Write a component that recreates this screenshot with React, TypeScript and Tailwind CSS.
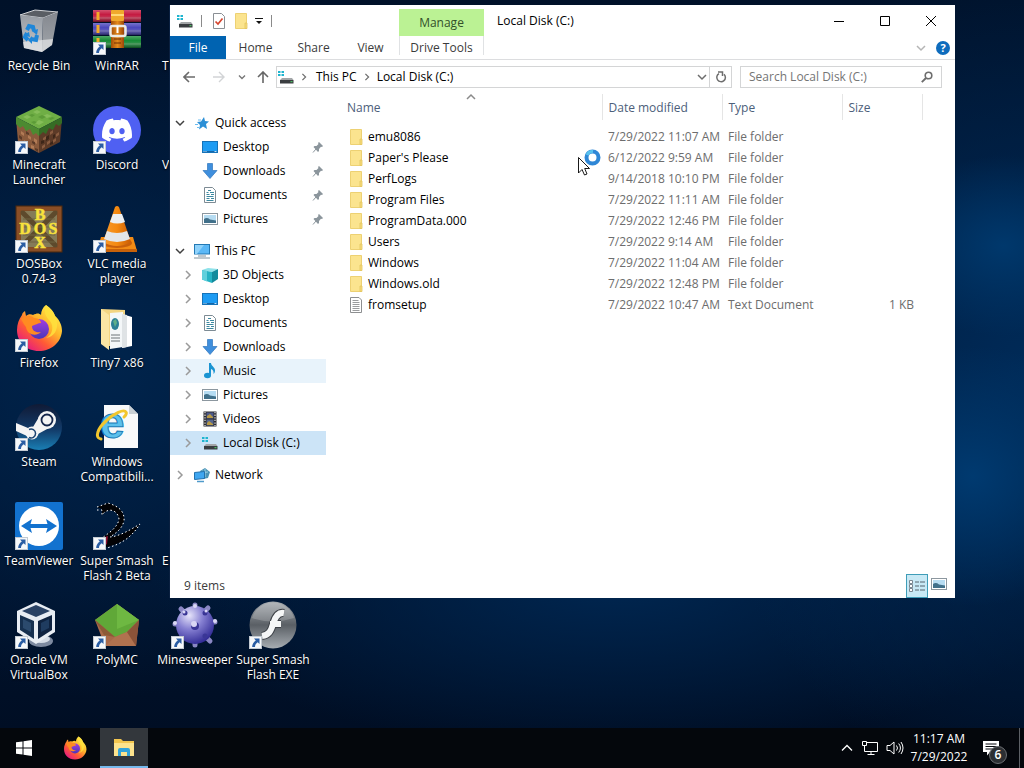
import type { ReactNode } from 'react';
import { SiDiscord } from 'react-icons/si';

type IconProps = { className?: string };

// ---------- desktop icons ----------

function RecycleBinIcon() {
  return (
    <svg viewBox="0 0 48 48" className="size-12">
      <defs>
        <linearGradient id="binL" x1="0" y1="0" x2="0" y2="1">
          <stop offset="0" stopColor="#989da4" /><stop offset="1" stopColor="#c4c7cb" />
        </linearGradient>
        <linearGradient id="binR" x1="0" y1="0" x2="0" y2="1">
          <stop offset="0" stopColor="#84888f" /><stop offset="1" stopColor="#a2a6ab" />
        </linearGradient>
      </defs>
      <path d="M5 8 L20 3 L43 5 L28 11 Z" fill="#5a5e64" stroke="#d4d6d9" strokeWidth="1" />
      <path d="M5 8 L28 11 L27 45 L9 41 Z" fill="url(#binL)" />
      <path d="M28 11 L43 5 L37 38 L27 45 Z" fill="url(#binR)" />
      <path d="M8 35 L27 33 L38 32 L37 38 L27 45 L9 41 Z" fill="#e6e7e8" opacity=".7" />
      <g fill="none" stroke="#1e86d8" strokeWidth="4">
        <path d="M12 23 L14 19 L18 20 L19 24" />
        <path d="M12 26 L10 30 L13 33" />
        <path d="M16 32 L21 33 L22 28" />
      </g>
      <path d="M17 24 L23 22 L22 28 Z M8 28 L14 25 L15 30 Z M17 29 L17 37 L13 33 Z" fill="#1e86d8" />
    </svg>
  );
}

function WinrarIcon() {
  return (
    <svg viewBox="0 0 48 48" className="size-12">
      <defs>
        <linearGradient id="strap" x1="0" y1="0" x2="1" y2="0">
          <stop offset="0" stopColor="#a34d08" /><stop offset=".5" stopColor="#e58a1b" /><stop offset="1" stopColor="#9a4508" />
        </linearGradient>
        <linearGradient id="bookShade" x1="0" y1="0" x2="0" y2="1">
          <stop offset="0" stopColor="#fff" stopOpacity=".25" /><stop offset=".4" stopColor="#fff" stopOpacity="0" /><stop offset="1" stopColor="#000" stopOpacity=".5" />
        </linearGradient>
      </defs>
      <rect x="0" y="3" width="48" height="12" fill="#c4183f" />
      <rect x="0" y="16" width="48" height="12" fill="#4945bb" />
      <rect x="0" y="29" width="48" height="12" fill="#148a34" />
      <path d="M0 11h48M0 24h48M0 37h48" stroke="#d9cfc4" strokeWidth="1" opacity=".35" />
      <rect x="0" y="3" width="48" height="12" fill="url(#bookShade)" />
      <rect x="0" y="16" width="48" height="12" fill="url(#bookShade)" />
      <rect x="0" y="29" width="48" height="12" fill="url(#bookShade)" />
      <path d="M5 5v8M5 18v8M5 31v8" stroke="#f3ac27" strokeWidth="3" />
      <rect x="18" y="3" width="13" height="38" fill="url(#strap)" />
      <rect x="18" y="3" width="13" height="11" rx="1" fill="#f0a92c" />
      <path d="M18 8h13" stroke="#ffd974" strokeWidth="2" />
      <rect x="17.500" y="19" width="15" height="10" rx="2" fill="none" stroke="#eceae4" strokeWidth="2.500" />
      <path d="M24.500 19v7" stroke="#fff" strokeWidth="2" />
      <path d="M21 32h7M21 36h7" stroke="#6f3004" />
    </svg>
  );
}

function MinecraftIcon() {
  return (
    <svg viewBox="0 0 48 48" className="size-12">
      <path d="M1 12 L24 24 L24 47 L3 36 Z" fill="#8a5a3c" />
      <path d="M47 12 L24 24 L24 47 L45 36 Z" fill="#5c3a27" />
      <path d="M24 0 L47 11 L24 23 L1 11 Z" fill="#6fae45" />
      <path d="M1 11 L24 23 V30 L21 27 L18 29 L15 23 L11 25 L8 20 L5 22 L1 18 Z" fill="#4c8a31" />
      <path d="M47 11 L24 23 V30 L28 26 L31 28 L34 22 L38 24 L41 18 L44 20 L47 17 Z" fill="#356c25" />
      <g fill="#85bd59">
        <path d="M22 4l4 2-4 2-4-2zM12 9l4 2-4 2-4-2zM32 8l5 2-5 2-4-2zM24 14l5 2-5 3-4-2z" />
      </g>
      <g fill="#5c9b38">
        <path d="M27 9l4 2-4 2-4-2zM17 8l3 1-3 2-3-2zM37 11l3 1-4 2-3-1zM19 15l3 1-3 2-3-2z" />
      </g>
      <g fill="#b27b55">
        <path d="M6 25l3 2v3l-3-2zM13 29l3 2v3l-3-2zM19 32l3 2v4l-3-2zM9 34l3 2v3l-3-2zM16 39l3 1v3l-3-1z" />
      </g>
      <g fill="#5b3a28">
        <path d="M4 29l3 2v3l-3-2zM11 25l3 2v2l-3-1zM17 35l3 1v3l-3-2zM20 42l3 1v3l-3-2z" />
      </g>
      <g fill="#8a5c40">
        <path d="M28 32l3-2v3l-3 2zM35 26l3-2v3l-3 2zM41 28l3-2v3l-3 2zM32 36l3-2v3l-3 2zM38 34l3-2v3l-3 2zM27 40l3-2v3l-3 2z" />
      </g>
      <g fill="#3d2619">
        <path d="M31 31l3-2v4l-3 2zM38 29l2-1v3l-2 2zM26 35l3-1v3l-3 1zM35 37l3-2v3l-3 1z" />
      </g>
    </svg>
  );
}

function DiscordIcon() {
  return (
    <span className="flex size-12 items-center justify-center rounded-full bg-[#4f60f2]">
      <SiDiscord className="size-[30px] text-white" />
    </span>
  );
}

function DosboxIcon() {
  return (
    <svg viewBox="0 0 48 48" className="size-12">
      <rect x="1" y="1" width="46" height="46" fill="#7a4a22" />
      <rect x="6" y="6" width="36" height="36" fill="#857b58" />
      <path d="M6 6 L42 42 M42 6 L6 42" stroke="#5d4a2c" strokeWidth="5" />
      <path d="M8 14h32M8 22h32M8 30h32M8 37h32" stroke="#6e6440" />
      <rect x="3.500" y="3.500" width="41" height="41" fill="none" stroke="#8a4e26" strokeWidth="4" />
      <rect x="1" y="1" width="46" height="46" fill="none" stroke="#4e280e" strokeWidth="1" />
      <g fill="#f8e23c" fontFamily="Liberation Serif, serif" fontWeight="700" fontSize="16" textAnchor="middle" stroke="#f8e23c" strokeWidth=".5">
        <text x="25" y="15">B</text>
        <text x="10" y="29">D</text>
        <text x="25" y="29">O</text>
        <text x="38" y="29">S</text>
        <text x="25" y="43">X</text>
      </g>
    </svg>
  );
}

function VlcIcon() {
  return (
    <svg viewBox="0 0 48 48" className="size-12">
      <defs>
        <linearGradient id="cone" x1="0" y1="0" x2="1" y2="0">
          <stop offset="0" stopColor="#f79a2e" /><stop offset=".5" stopColor="#f58a10" /><stop offset="1" stopColor="#c95b05" />
        </linearGradient>
      </defs>
      <path d="M8 32 H40 L44 46 H4 Z" fill="#f38b14" />
      <path d="M4 44 H44 V47 H4 Z" fill="#c8620a" />
      <ellipse cx="24" cy="38" rx="15" ry="5" fill="#c9600b" />
      <path d="M22 2 Q24 0 26 2 L38 37 Q24 45 10 37 Z" fill="url(#cone)" />
      <path d="M20 9 H29 L32 17 Q24 20 17 17 Z" fill="#eceff1" />
      <path d="M14 26 Q24 30 34 26 L37 34 Q24 40 11 34 Z" fill="#e3e6e9" />
    </svg>
  );
}

function FirefoxIcon({ className = 'size-12' }: IconProps) {
  return (
    <svg viewBox="0 0 48 48" className={className}>
      <defs>
        <linearGradient id="fxA" x1=".85" y1=".1" x2=".15" y2=".95">
          <stop offset="0" stopColor="#fff04a" /><stop offset=".35" stopColor="#ffb52b" /><stop offset=".65" stopColor="#ff5a36" /><stop offset="1" stopColor="#e31587" />
        </linearGradient>
        <linearGradient id="fxB" x1="0" y1="0" x2="0" y2="1">
          <stop offset="0" stopColor="#a23ee0" /><stop offset="1" stopColor="#4a36b8" />
        </linearGradient>
      </defs>
      <path d="M31 1 C36 4 39 8 40 12 C45 16 47 22 47 27 C46 39 36 47 24 47 C11 47 2 38 2 26 C2 20 4 15 7 11 C7 10 8 8 10 7 L11 12 C13 10 16 10 18 11 C22 9 24 9 26 11 C26 7 28 3 31 1 Z" fill="url(#fxA)" />
      <circle cx="24" cy="25" r="10" fill="url(#fxB)" />
      <path d="M6 15 C10 11 15 11 19 14 C24 14 26 17 26 19 C23 19 20 21 17 22 C17 27 21 29 26 28 C21 33 12 31 11 23 C9 21 8 18 6 15 Z" fill="#ff8b21" />
      <path d="M31 1 C28 8 31 13 35 17 C39 22 38 31 31 34 C39 33 43 26 42 18 C41 10 36 5 31 1 Z" fill="#ffe03d" opacity=".85" />
    </svg>
  );
}

function OpenFolderIcon() {
  return (
    <svg viewBox="0 0 48 48" className="size-12">
      <path d="M8 5 L32 6 V42 H12 L8 38 Z" fill="#f3d582" />
      <path d="M17 9 L30 8 V43 L17 45 Z" fill="#f4f7f8" />
      <path d="M29 10 L39 13 V42 L29 44 Z" fill="#fff" />
      <path d="M29 10 L34 11 V43 L29 44 Z" fill="#dfe3e5" />
      <ellipse cx="22" cy="20" rx="4" ry="6" fill="#2d7f96" />
      <path d="M20 17 l3 -2 1 4 -2 4z" fill="#5eae8a" />
      <path d="M18 31h9M18 34h9M18 37h9" stroke="#6d7478" />
      <path d="M8 5 L16 11 V46 L8 40 Z" fill="#fbe6a4" />
    </svg>
  );
}

function SteamIcon() {
  return (
    <svg viewBox="0 0 48 48" className="size-12">
      <defs>
        <linearGradient id="steam" x1="0" y1="0" x2="0" y2="1">
          <stop offset="0" stopColor="#101a35" /><stop offset=".55" stopColor="#123a68" /><stop offset="1" stopColor="#1a7fb4" />
        </linearGradient>
      </defs>
      <circle cx="24" cy="24" r="23" fill="url(#steam)" />
      <path d="M1 20 L13 25 L18 24 L24 14 L34 25 L23 31 L21 34 L12 33 L1 28 Z" fill="#f4f4f4" />
      <circle cx="17" cy="30" r="6.500" fill="#f4f4f4" />
      <path d="M14 34.500 a4.500 4.500 0 1 0 0 -8" fill="none" stroke="#1a4371" strokeWidth="1.500" />
      <circle cx="32" cy="17" r="9" fill="#f4f4f4" />
      <circle cx="32" cy="17" r="5.500" fill="#f4f4f4" stroke="#14254a" strokeWidth="1.800" />
    </svg>
  );
}

function IeIcon() {
  return (
    <svg viewBox="0 0 48 48" className="size-12 overflow-visible">
      <path d="M11 2 H36 L45 11 V45 H11 Z" fill="#f8f9fa" />
      <path d="M36 2 L45 11 H36 Z" fill="#c9d0d5" />
      <text x="7" y="35" fontFamily="Liberation Sans, sans-serif" fontWeight="700" fontSize="44" fill="#5cc0ec" stroke="#1a7cb8" strokeWidth="1">e</text>
      <path d="M8 36 C1 35 5 25 13 18 C21 10 31 6 33 9 C34 10 33 12 31 14" fill="none" stroke="#f2c62d" strokeWidth="3" strokeLinecap="round" />
    </svg>
  );
}

function TeamviewerIcon() {
  return (
    <svg viewBox="0 0 48 48" className="size-12">
      <rect width="48" height="48" rx="2" fill="#1272cf" />
      <circle cx="24" cy="24" r="20" fill="#fff" />
      <path d="M6 24 L17 17 L15.500 22 H32.500 L31 17 L42 24 L31 31 L32.500 26 H15.500 L17 31 Z" fill="#1272cf" />
    </svg>
  );
}

function SmashFlashIcon() {
  return (
    <svg viewBox="0 0 48 48" className="size-12">
      <path d="M4 5 L15 1 C24 4 32 8 31 19 C29 27 23 31 17 35 C27 34 37 28 47 22 C38 36 28 42 9 46 V36 C16 31 25 25 26 17 C25 9 16 4 9 13 L9 7 Z" fill="#020205" />
      <path d="M9 36 L15 34 L14 42 L9 46 Z" fill="#8d1030" />
      <path d="M4 5 L15 1 C24 4 32 8 31 19 C29 27 23 31 17 35 C27 34 37 28 47 22 C38 36 28 42 14 46" fill="none" stroke="#fff" strokeWidth="1" strokeDasharray="1.500 2.500" />
      <path d="M4 8 L9 8 V13 C16 4 25 9 26 17 C25 25 16 31 9 36" fill="none" stroke="#fff" strokeWidth="1" strokeDasharray="1.500 2.500" />
    </svg>
  );
}

function VirtualboxIcon() {
  return (
    <svg viewBox="0 0 48 48" className="size-12">
      <ellipse cx="26" cy="40" rx="12" ry="6" fill="#7d8aa0" />
      <ellipse cx="26" cy="38" rx="9" ry="4" fill="#d5dce6" />
      <path d="M21 1 L40 10 V31 L21 43 L2 31 V10 Z" fill="#e8edf3" />
      <path d="M21 4 L35 10 L21 16 L7 10 Z" fill="#2a4264" />
      <path d="M5 14 L19 20 V38 L5 29 Z" fill="#16304f" />
      <path d="M37 14 L23 20 V38 L37 29 Z" fill="#0f2340" />
      <path d="M8 18 L16 22 V31 L8 27 Z" fill="#2b4a6d" />
      <path d="M34 18 L26 22 V31 L34 27 Z" fill="#1f3c60" />
    </svg>
  );
}

function PolymcIcon() {
  return (
    <svg viewBox="0 0 48 48" className="size-12">
      <path d="M24 3 L46 19 L43 45 H12 L2 19 Z" fill="#a9694a" />
      <path d="M24 3 L46 19 L34 31 L22 36 L2 19 Z" fill="#60a838" />
      <path d="M24 3 L46 19 L24 28 Z" fill="#6eb842" />
      <path d="M2 19 L22 36 L11 34 Z" fill="#8c5a38" />
      <path d="M22 36 L34 31 L43 45 H12 Z" fill="#b1724f" />
      <path d="M46 19 L34 31 L43 45 Z" fill="#8b5339" />
    </svg>
  );
}

function MinesweeperIcon() {
  return (
    <svg viewBox="0 0 48 48" className="size-12">
      <defs>
        <radialGradient id="mine" cx=".35" cy=".25" r=".8">
          <stop offset="0" stopColor="#e6e4fa" /><stop offset=".45" stopColor="#8680d2" /><stop offset="1" stopColor="#2d2792" />
        </radialGradient>
      </defs>
      <g stroke="#8a87c4" strokeWidth="5" strokeLinecap="round">
        <path d="M24 4v6M24 38v6M4 23h5M39 21h5M10 8l4 4M37 7l-4 4M39 40l-5-5M10 39l4-4" />
      </g>
      <circle cx="24" cy="24" r="19" fill="url(#mine)" />
      <g fill="#3a3696">
        <circle cx="24" cy="25" r="4" /><circle cx="14" cy="12" r="2.500" /><circle cx="34" cy="12" r="2.500" /><circle cx="34" cy="35" r="2.500" />
      </g>
      <g fill="#d9d7f4">
        <circle cx="23" cy="23" r="3" /><circle cx="13" cy="11" r="1.500" /><circle cx="35" cy="10" r="1.500" /><circle cx="24" cy="5" r="2" /><circle cx="4" cy="22" r="2" /><circle cx="44" cy="20" r="2" />
      </g>
    </svg>
  );
}

function FlashIcon() {
  return (
    <svg viewBox="0 0 48 48" className="size-12">
      <defs>
        <linearGradient id="flash" x1="0" y1="0" x2="0" y2="1">
          <stop offset="0" stopColor="#a4a9ae" /><stop offset=".5" stopColor="#5a5f65" /><stop offset="1" stopColor="#a7adb2" />
        </linearGradient>
      </defs>
      <circle cx="24" cy="24" r="23.500" fill="url(#flash)" />
      <path d="M3 17 A22 22 0 0 1 45 17 Q24 24 3 17 Z" fill="#fff" opacity=".18" />
      <path d="M35 12 C29 11 26 16 24 23 C22 30 20 34 13 35 M21 23 H32" fill="none" stroke="#3c4046" strokeWidth="8" />
      <path d="M35 12 C29 11 26 16 24 23 C22 30 20 34 13 35 M21 23 H32" fill="none" stroke="#f5f6f7" strokeWidth="6" />
    </svg>
  );
}

function ShortcutArrow() {
  return (
    <svg viewBox="0 0 13 13" className="absolute bottom-0 left-0 size-[13px]">
      <rect x=".5" y=".5" width="12" height="12" fill="#f6f8fa" stroke="#c3cad2" />
      <path d="M5 2.500 H10.500 V8 L8.700 6.300 C7 7.500 6 9 6 11 H3.200 C3 8.500 4.500 6 6.800 4.400 Z" fill="#2a5da3" />
    </svg>
  );
}

type DesktopItem = { label: string; icon?: ReactNode; shortcut?: boolean };

const DESKTOP_ITEMS: (DesktopItem | null)[] = [
  { label: 'Recycle Bin', icon: <RecycleBinIcon /> },
  { label: 'Minecraft\nLauncher', icon: <MinecraftIcon />, shortcut: true },
  { label: 'DOSBox\n0.74-3', icon: <DosboxIcon />, shortcut: true },
  { label: 'Firefox', icon: <FirefoxIcon />, shortcut: true },
  { label: 'Steam', icon: <SteamIcon />, shortcut: true },
  { label: 'TeamViewer', icon: <TeamviewerIcon />, shortcut: true },
  { label: 'Oracle VM\nVirtualBox', icon: <VirtualboxIcon />, shortcut: true },
  { label: 'WinRAR', icon: <WinrarIcon />, shortcut: true },
  { label: 'Discord', icon: <DiscordIcon />, shortcut: true },
  { label: 'VLC media\nplayer', icon: <VlcIcon />, shortcut: true },
  { label: 'Tiny7 x86', icon: <OpenFolderIcon /> },
  { label: 'Windows\nCompatibili...', icon: <IeIcon /> },
  { label: 'Super Smash\nFlash 2 Beta', icon: <SmashFlashIcon />, shortcut: true },
  { label: 'PolyMC', icon: <PolymcIcon />, shortcut: true },
  { label: 'T' },
  { label: 'V' },
  null,
  null,
  null,
  { label: 'E' },
  { label: 'Minesweeper', icon: <MinesweeperIcon />, shortcut: true },
  null,
  null,
  null,
  null,
  null,
  null,
  { label: 'Super Smash\nFlash EXE', icon: <FlashIcon />, shortcut: true },
];

function DesktopTile({ item }: { item: DesktopItem }) {
  return (
    <button className={`flex flex-col pt-[7px] ${item.icon ? 'items-center' : 'items-start pl-1.5'}`}>
      <span className="relative block size-12">
        {item.icon}
        {item.shortcut && <ShortcutArrow />}
      </span>
      <span className="mt-[3px] whitespace-pre text-center leading-[15px] text-white [text-shadow:0_1px_2px_#000]">
        {item.label}
      </span>
    </button>
  );
}

// ---------- explorer icons ----------

function DriveIcon({ className = 'size-4' }: IconProps) {
  return (
    <svg viewBox="0 0 16 16" className={className}>
      <path d="M0 2h2.500v2H0zM3.500 2H6v2H3.500zM0 5h2.500v2H0zM3.500 5H6v2H3.500z" fill="#1fb5cf" />
      <path d="M4 9 H14 L15.500 11 H2 Z" fill="#a3a6a8" />
      <rect x="2" y="11" width="13.500" height="3.500" fill="#3a3d40" />
      <path d="M12.500 12.700h2" stroke="#4fdc6a" />
    </svg>
  );
}

function FolderIcon() {
  return (
    <svg viewBox="0 0 16 18" className="h-[18px] w-4">
      <path d="M2.500 1.500 H13.500 V16.500 H2.500 Z" fill="#fbe48f" stroke="#edd173" />
      <path d="M12 11 H14 V16.500 H12 Z" fill="#f7dc7c" stroke="#e3c45e" strokeWidth=".8" />
    </svg>
  );
}

function TextFileIcon() {
  return (
    <svg viewBox="0 0 16 18" className="h-[18px] w-4">
      <path d="M2.500 1.500 H11 L13.500 4 V16.500 H2.500 Z" fill="#fff" stroke="#8d8f91" />
      <path d="M4.500 4.500h6M4.500 6.500h7M4.500 8.500h7M4.500 10.500h7M4.500 12.500h7M4.500 14.500h7" stroke="#9a9c9e" />
    </svg>
  );
}

function StarIcon() {
  return (
    <svg viewBox="0 0 16 16" className="size-4">
      <path d="M10 2 L11 6 L15 6.500 L12 9 L13 14 L9 11.500 L5 14.500 L6 10 L3 7 L7 6.500 Z" fill="#2b8fd6" />
      <path d="M1 9.500h3M3 12.500h2M4 5h3" stroke="#6bbcf0" />
    </svg>
  );
}

function DesktopIcon() {
  return (
    <svg viewBox="0 0 16 16" className="size-4">
      <rect x=".5" y="2.500" width="15" height="11" fill="#1e9cf3" stroke="#1673b9" />
      <path d="M1 12.500h14" stroke="#1566a8" />
      <path d="M1.500 12.500h1M3.500 12.500h1M12.500 12.500h2" stroke="#bfe2ff" />
    </svg>
  );
}

function DownloadIcon() {
  return (
    <svg viewBox="0 0 16 16" className="size-4">
      <path d="M5.500 .5 H10.500 V7.500 H15 L8 15.500 L1 7.500 H5.500 Z" fill="#3f8fdd" stroke="#2f76bb" strokeWidth=".7" />
    </svg>
  );
}

function DocumentIcon() {
  return (
    <svg viewBox="0 0 16 16" className="size-4">
      <path d="M2.500 .5 H10.500 L13.500 3.500 V15.500 H2.500 Z" fill="#fff" stroke="#7d8b94" />
      <path d="M4.500 5.500h2M8 5.500h4M4.500 7.500h3M9 7.500h3M4.500 9.500h7M4.500 11.500h3M9 11.500h3M4.500 13.500h7M6 3.500h3" stroke="#3d88a0" />
    </svg>
  );
}

function PictureIcon() {
  return (
    <svg viewBox="0 0 16 16" className="size-4">
      <rect x=".5" y="2.500" width="15" height="11" fill="#fff" stroke="#8c979f" />
      <rect x="2" y="4" width="12" height="8" fill="#b6dcf2" />
      <path d="M2 8 Q5 6 8 8.500 L14 9.500 V12 H2 Z" fill="#41708a" />
    </svg>
  );
}

function ComputerIcon() {
  return (
    <svg viewBox="0 0 16 16" className="size-4">
      <rect x=".5" y="1.500" width="15" height="9.500" fill="#5bb8f6" stroke="#2379b4" />
      <path d="M1 2 H10 L3 11 H1 Z" fill="#8fd2fb" />
      <path d="M4 13h8M0 15h16" stroke="#7e929e" />
    </svg>
  );
}

function CubeIcon() {
  return (
    <svg viewBox="0 0 16 16" className="size-4">
      <path d="M0 3 L6 1 L16 2 L10 5 Z" fill="#8ee2ea" />
      <path d="M0 3 L10 5 V16 L0 12.500 Z" fill="#25b3c4" />
      <path d="M10 5 L16 2 V12 L10 16 Z" fill="#128a9c" />
      <path d="M0 3 L5 4 V14.500 L0 12.500 Z" fill="#5fd0dc" />
    </svg>
  );
}

function MusicIcon() {
  return (
    <svg viewBox="0 0 16 16" className="size-4">
      <ellipse cx="5.500" cy="12.500" rx="3.500" ry="2.800" fill="#1b94d2" />
      <path d="M7 0 H9 C9 3 13 4 13 7.500 C13 9 12.500 10 11.500 11 C12 8 10.500 6.500 9 6 V12.500 H7 Z" fill="#1b94d2" />
    </svg>
  );
}

function VideoIcon() {
  return (
    <svg viewBox="0 0 16 16" className="size-4">
      <rect x="1.500" y=".5" width="13" height="15" fill="#2c2c30" />
      <path d="M3 1v14M13 1v14" stroke="#d8d8d8" strokeWidth="1.300" strokeDasharray="1.300 1.300" />
      <rect x="4.500" y="1.500" width="7" height="6" fill="#4c5a8c" />
      <rect x="4.500" y="8.500" width="7" height="6" fill="#57678f" />
      <path d="M5 5l3-2 3 3v1H5zM5 12l2-2 4 3v1H5z" fill="#b89a45" />
    </svg>
  );
}

function NetworkIcon() {
  return (
    <svg viewBox="0 0 16 16" className="size-4">
      <path d="M6 4 L11 1 L16 5 L14 11 L9 12 Z" fill="#4b93b5" />
      <path d="M8 4 q3 2 6 1 M11 2v8" stroke="#9fd3e8" fill="none" />
      <path d="M.5 5.500 L10.500 4.500 V11.500 L.5 12.500 Z" fill="#3fa6f0" stroke="#2271ad" />
      <path d="M3 14.500h7" stroke="#4f9acb" strokeWidth="1.500" />
    </svg>
  );
}

function PinIcon() {
  return (
    <svg viewBox="0 0 12 12" className="size-3">
      <path d="M7 1 L11 5 L10 6 L9 5.700 L7 8 L7 10 L6 11 L1.500 6 L2.500 5 L4.500 5 L6.500 3 L6 2 Z" fill="#8b959c" />
      <path d="M4 8 L1 11.500" stroke="#8b959c" />
    </svg>
  );
}

function Chevron({ dir, className = 'size-2.5' }: { dir: 'right' | 'down' | 'up'; className?: string }) {
  const d = { right: 'M3 1 L7 5 L3 9', down: 'M1 3 L5 7 L9 3', up: 'M1 7 L5 3 L9 7' }[dir];
  return (
    <svg viewBox="0 0 10 10" className={`shrink-0 ${className}`}>
      <path d={d} fill="none" stroke="currentColor" strokeWidth="1.500" />
    </svg>
  );
}

type TreeRow = {
  label: string; icon: ReactNode; root?: boolean; open?: boolean; pinned?: boolean; state?: 'hover' | 'selected';
};

const TREE: TreeRow[][] = [
  [
    { label: 'Quick access', icon: <StarIcon />, root: true, open: true },
    { label: 'Desktop', icon: <DesktopIcon />, pinned: true },
    { label: 'Downloads', icon: <DownloadIcon />, pinned: true },
    { label: 'Documents', icon: <DocumentIcon />, pinned: true },
    { label: 'Pictures', icon: <PictureIcon />, pinned: true },
  ],
  [
    { label: 'This PC', icon: <ComputerIcon />, root: true, open: true },
    { label: '3D Objects', icon: <CubeIcon /> },
    { label: 'Desktop', icon: <DesktopIcon /> },
    { label: 'Documents', icon: <DocumentIcon /> },
    { label: 'Downloads', icon: <DownloadIcon /> },
    { label: 'Music', icon: <MusicIcon />, state: 'hover' },
    { label: 'Pictures', icon: <PictureIcon /> },
    { label: 'Videos', icon: <VideoIcon /> },
    { label: 'Local Disk (C:)', icon: <DriveIcon />, state: 'selected' },
  ],
  [{ label: 'Network', icon: <NetworkIcon />, root: true }],
];

const FILES = [
  { name: 'emu8086', date: '7/29/2022 11:07 AM', type: 'File folder', size: '' },
  { name: "Paper's Please", date: '6/12/2022 9:59 AM', type: 'File folder', size: '' },
  { name: 'PerfLogs', date: '9/14/2018 10:10 PM', type: 'File folder', size: '' },
  { name: 'Program Files', date: '7/29/2022 11:11 AM', type: 'File folder', size: '' },
  { name: 'ProgramData.000', date: '7/29/2022 12:46 PM', type: 'File folder', size: '' },
  { name: 'Users', date: '7/29/2022 9:14 AM', type: 'File folder', size: '' },
  { name: 'Windows', date: '7/29/2022 11:04 AM', type: 'File folder', size: '' },
  { name: 'Windows.old', date: '7/29/2022 12:48 PM', type: 'File folder', size: '' },
  { name: 'fromsetup', date: '7/29/2022 10:47 AM', type: 'Text Document', size: '1 KB' },
];

function TitleBar() {
  return (
    <header className="flex h-[31px] items-stretch pr-px">
      <div className="flex w-[229px] items-center pl-[7px]">
        <DriveIcon />
        <span className="ml-2 h-3 w-px bg-[#8a8a8a]" />
        <button aria-label="Properties" className="ml-2.5">
          <svg viewBox="0 0 14 16" className="h-4 w-3.5">
            <path d="M1.500 .5 H9.500 L12.500 3.500 V15.500 H1.500 Z" fill="#fff" stroke="#8a8f94" />
            <path d="M3.500 8.500 L6 11 L10.500 5.500" fill="none" stroke="#d6452f" strokeWidth="1.700" />
          </svg>
        </button>
        <button aria-label="New folder" className="ml-[7px]"><FolderIcon /></button>
        <button aria-label="Customize Quick Access Toolbar" className="ml-1.5">
          <svg viewBox="0 0 8 8" className="size-2"><path d="M0 1.500h8" stroke="#111" /><path d="M1 4 H7 L4 7 Z" fill="#111" /></svg>
        </button>
        <span className="ml-2 h-3 w-px bg-[#8a8a8a]" />
      </div>
      <div className="mt-1 flex w-[85px] items-center justify-center bg-[#bbf294] text-[#33502a]">Manage</div>
      <h1 className="flex-1 self-center pl-[13px] text-black">Local Disk (C:)</h1>
      <button aria-label="Minimize" className="flex w-[46px] items-center justify-center">
        <svg viewBox="0 0 10 10" className="size-2.5"><path d="M0 5.500h10" stroke="#000" /></svg>
      </button>
      <button aria-label="Maximize" className="flex w-[46px] items-center justify-center">
        <svg viewBox="0 0 10 10" className="size-2.5"><path d="M.5 .5h9v9h-9z" fill="none" stroke="#000" /></svg>
      </button>
      <button aria-label="Close" className="flex w-[46px] items-center justify-center">
        <svg viewBox="0 0 10 10" className="size-2.5"><path d="M0 0L10 10M10 0L0 10" stroke="#000" /></svg>
      </button>
    </header>
  );
}

function RibbonTabs() {
  return (
    <nav className="flex h-6 items-stretch border-b border-[#dcdddf] text-[#3b3b3b]">
      <button className="w-14 bg-[#0063b1] text-white">File</button>
      <button className="w-[59px]">Home</button>
      <button className="w-[57px]">Share</button>
      <button className="w-[57px]">View</button>
      <button className="mb-1 w-[85px] border-x border-[#e0e2e4] pt-1">Drive Tools</button>
      <div className="flex flex-1 items-center justify-end gap-2.5 pr-[5px]">
        <button aria-label="Expand the Ribbon" className="text-[#b5b5b5]"><Chevron dir="down" /></button>
        <button aria-label="Help" className="flex size-3.5 items-center justify-center rounded-full bg-[#0e6cbd] text-[11px] leading-none font-bold text-white">?</button>
      </div>
    </nav>
  );
}

function AddressRow() {
  return (
    <div className="flex h-[34px] items-center px-[13px] text-[#6d6d6d]">
      <button aria-label="Back">
        <svg viewBox="0 0 12 12" className="size-3"><path d="M12 6H1M6 1L1 6l5 5" fill="none" stroke="#6b6b6b" strokeWidth="1.600" /></svg>
      </button>
      <button aria-label="Forward" className="ml-[18px]">
        <svg viewBox="0 0 12 12" className="size-3"><path d="M0 6h11M6 1l5 5-5 5" fill="none" stroke="#d2d4d6" strokeWidth="1.400" /></svg>
      </button>
      <button aria-label="Recent locations" className="ml-[13px]">
        <svg viewBox="0 0 8 8" className="size-2"><path d="M1 2.500l3 3 3-3" fill="none" stroke="#777" strokeWidth="1.400" /></svg>
      </button>
      <button aria-label="Up" className="ml-[11px]">
        <svg viewBox="0 0 12 12" className="size-3"><path d="M6 12V1M1 6l5-5 5 5" fill="none" stroke="#666" strokeWidth="1.600" /></svg>
      </button>
      <div className="ml-[7px] flex h-[22px] flex-1 items-center border border-[#d4d5d6]">
        <DriveIcon className="ml-px size-4" />
        <Chevron dir="right" className="mx-1.5 size-2" />
        <button className="ml-0.5 text-black">This PC</button>
        <Chevron dir="right" className="mx-1.5 size-2" />
        <button className="text-black">Local Disk (C:)</button>
        <button aria-label="Previous locations" className="mr-0.5 ml-auto"><Chevron dir="down" /></button>
        <button aria-label="Refresh" className="flex h-full w-[22px] items-center justify-center border-l border-[#d4d5d6]">
          <svg viewBox="0 0 12 12" className="size-3">
            <path d="M9 3.200 A4.300 4.300 0 1 1 4 2.600" fill="none" stroke="#6d6d6d" strokeWidth="1.500" />
            <path d="M3 1 H7.500 V5" fill="none" stroke="#6d6d6d" strokeWidth="1.500" />
          </svg>
        </button>
      </div>
      <label className="ml-2 flex h-[22px] w-[202px] items-center border border-[#d4d5d6] px-2">
        <input
          type="text"
          aria-label="Search Local Disk (C:)"
          placeholder="Search Local Disk (C:)"
          className="min-w-0 flex-1 outline-none placeholder:text-[#757575]"
        />
        <svg viewBox="0 0 12 12" className="size-3">
          <circle cx="7.500" cy="4.500" r="3.300" fill="none" stroke="#6d6d6d" strokeWidth="1.600" />
          <path d="M5 7L.8 11.200" stroke="#6d6d6d" strokeWidth="1.900" />
        </svg>
      </label>
    </div>
  );
}

function NavTree() {
  return (
    <aside className="w-[156px] shrink-0 space-y-2 pt-[17px]">
      {TREE.map((group, i) => (
        <ul key={i}>
          {group.map((row) => (
            <li key={row.label}>
              <button
                className={`flex h-6 w-full items-center text-left text-black ${row.root ? 'pl-[5px]' : 'pl-[13px]'} ${
                  row.state === 'selected' ? 'bg-[#cce4f7]' : row.state === 'hover' ? 'bg-[#e8f3fb]' : ''
                }`}
              >
                <span className={`w-2.5 ${row.open ? 'text-[#404040]' : 'text-[#9a9a9a]'}`}>
                  {!row.pinned && <Chevron dir={row.open ? 'down' : 'right'} />}
                </span>
                <span className="mr-[5px] ml-[9px]">{row.icon}</span>
                <span className="flex-1 whitespace-nowrap">{row.label}</span>
                {row.pinned && <span className="mr-0.5"><PinIcon /></span>}
              </button>
            </li>
          ))}
        </ul>
      ))}
    </aside>
  );
}

function FileTable() {
  return (
    <table className="h-fit w-[586px] table-fixed text-left text-[#6d6d6d]">
      <colgroup>
        <col className="w-[266px]" />
        <col className="w-[120px]" />
        <col className="w-[120px]" />
        <col className="w-20" />
      </colgroup>
      <thead>
        <tr className="h-[26px] text-[#4c607a]">
          <th className="relative border-r border-[#e5e5e5] pt-0.5 pl-[11px] font-normal">
            Name
            <Chevron dir="up" className="absolute -top-0.5 left-[130px] size-2.5 text-[#8a8a8a]" />
          </th>
          <th className="border-r border-[#e5e5e5] pt-0.5 pl-1.5 font-normal">Date modified</th>
          <th className="border-r border-[#e5e5e5] pt-0.5 pl-1.5 font-normal">Type</th>
          <th className="border-r border-[#e5e5e5] pt-0.5 pl-1.5 font-normal">Size</th>
        </tr>
      </thead>
      <tbody className="before:block before:h-1.5">
        {FILES.map((f) => (
          <tr key={f.name} className="h-[21px]">
            <td className="pl-3 text-black">
              <span className="flex items-center gap-1">
                {f.type === 'File folder' ? <FolderIcon /> : <TextFileIcon />}
                {f.name}
              </span>
            </td>
            <td className="pl-1.5 whitespace-nowrap">{f.date}</td>
            <td className="pl-1.5">{f.type}</td>
            <td className="pr-2 text-right">{f.size}</td>
          </tr>
        ))}
      </tbody>
    </table>
  );
}

function StatusBar() {
  return (
    <footer className="flex h-[25px] items-center pr-[7px] text-[#3c3c3c]">
      <span className="flex-1 pl-3.5">9 items</span>
      <button aria-label="Details view" className="flex h-6 w-[22px] items-center justify-center border border-[#3f9db8] bg-[#c8e9f5]">
        <svg viewBox="0 0 16 14" className="h-3.5 w-4">
          <path d="M.5 1.500h3v3h-3zM.5 5.500h3v3h-3zM.5 9.500h3v3h-3z" fill="#fff" stroke="#7a8790" />
          <path d="M6 3h4M11 3h5M6 7h4M11 7h5M6 11h4M11 11h5" stroke="#56646e" />
        </svg>
      </button>
      <button aria-label="Thumbnail view" className="ml-0.5 p-px pb-1">
        <PictureIcon />
      </button>
    </footer>
  );
}

function ExplorerWindow() {
  return (
    <section className="absolute top-[5px] right-[69px] bottom-[170px] left-[169px] flex flex-col border-l border-[#0a2040] bg-white">
      <TitleBar />
      <RibbonTabs />
      <AddressRow />
      <div className="flex min-h-0 flex-1 gap-2.5">
        <NavTree />
        <FileTable />
      </div>
      <StatusBar />
    </section>
  );
}

function BusyCursor() {
  return (
    <svg viewBox="0 0 24 28" className="pointer-events-none absolute top-[148px] left-[577px] h-7 w-6">
      <circle cx="15.500" cy="9.500" r="6" fill="none" stroke="#2f87d6" strokeWidth="4" />
      <path d="M10 7 A6 6 0 0 1 16 3.500" fill="none" stroke="#58c1ee" strokeWidth="3" />
      <path d="M1.500 9.500 V25 L5 21.500 L7.500 27 L10 26 L7.700 20.500 H12.500 Z" fill="#fff" stroke="#000" strokeWidth=".9" />
    </svg>
  );
}

function Taskbar() {
  return (
    <footer className="absolute inset-x-0 bottom-0 flex h-10 items-stretch bg-[#04070c] text-white">
      <button aria-label="Start" className="flex w-12 items-center justify-center">
        <svg viewBox="0 0 16 16" className="size-4">
          <path d="M0 2.300 L6.500 1.400 V7.500 H0 Z M7.500 1.200 L16 0 V7.500 H7.500 Z M0 8.500 H6.500 V14.600 L0 13.700 Z M7.500 8.500 H16 V16 L7.500 14.800 Z" fill="#fff" />
        </svg>
      </button>
      <button aria-label="Firefox" className="ml-[3px] flex w-12 items-center justify-center"><FirefoxIcon className="size-6" /></button>
      <button aria-label="File Explorer" className="ml-px flex w-12 items-center justify-center border-b-2 border-[#76b9ed] bg-[#33373c] pt-0.5">
        <svg viewBox="0 0 24 20" className="h-5 w-6">
          <path d="M2 1 H9 L11 3 H22 V18 H2 Z" fill="#f3c64f" />
          <path d="M2 5 H22 V18 H2 Z" fill="#fde38d" />
          <path d="M6 18 V12 Q6 10 8 10 H16 Q18 10 18 12 V18 H15 V14 H9 V18 Z" fill="#33a3da" />
        </svg>
      </button>
      <div className="ml-auto flex items-center">
        <button aria-label="Show hidden icons">
          <svg viewBox="0 0 12 12" className="size-3"><path d="M1 8.500l5-5 5 5" fill="none" stroke="#fff" strokeWidth="1.300" /></svg>
        </button>
        <svg viewBox="0 0 18 16" className="ml-2 h-4 w-[18px]">
          <path d="M6 2.500H16.500V11.500H3.500V7M6.500 14.500h7M10 11.500v3" fill="none" stroke="#fff" />
          <path d="M1.500 1.500h4v4h-4zM3.500 5.500v3" fill="none" stroke="#fff" />
        </svg>
        <svg viewBox="0 0 18 16" className="ml-[7px] h-4 w-[18px]">
          <path d="M1 5.500H4L8 2V14L4 10.500H1Z" fill="none" stroke="#fff" />
          <path d="M10.500 5.500q2 2.500 0 5M12.700 3.500q3.500 4.500 0 9M15 2q4 6 0 12" fill="none" stroke="#fff" />
        </svg>
        <time className="flex w-[70px] flex-col items-center leading-[18px] whitespace-nowrap">
          <span>11:17 AM</span>
          <span>7/29/2022</span>
        </time>
        <button aria-label="Notifications" className="relative ml-[7px] flex h-full w-[38px] items-center">
          <svg viewBox="0 0 16 16" className="ml-0.5 size-4">
            <path d="M0 1H16V12H7L4 15.500V12H0Z" fill="#fff" />
            <path d="M2.500 4h11M2.500 6.500h11M2.500 9h7" stroke="#04070c" />
          </svg>
          <span className="absolute top-[18px] left-2 flex size-[18px] items-center justify-center rounded-full border border-[#6b6e72] bg-[#2c2f33] leading-none font-semibold">6</span>
        </button>
        <span className="mr-1 h-full w-px bg-[#5c6066]" />
      </div>
    </footer>
  );
}

export default function App() {
  return (
    <main className="relative h-screen overflow-hidden bg-[#001532] bg-[radial-gradient(ellipse_120px_90px_at_98%_32%,#00386c,transparent),radial-gradient(ellipse_140px_130px_at_95%_62%,#003a70,transparent),radial-gradient(ellipse_330px_420px_at_100%_48%,#002a57,transparent),radial-gradient(ellipse_45%_22%_at_60%_76%,#002650,transparent),radial-gradient(ellipse_320px_330px_at_10%_48%,#00244c,transparent),linear-gradient(#001129,#00193a_45%,#000e24_95%)] font-['Open_Sans','Noto_Sans',sans-serif] text-xs">
      <div className="grid h-[693px] auto-cols-[78px] grid-flow-col grid-rows-7">
        {DESKTOP_ITEMS.map((item, i) => (item ? <DesktopTile key={i} item={item} /> : <span key={i} />))}
      </div>
      <ExplorerWindow />
      <BusyCursor />
      <Taskbar />
    </main>
  );
}
